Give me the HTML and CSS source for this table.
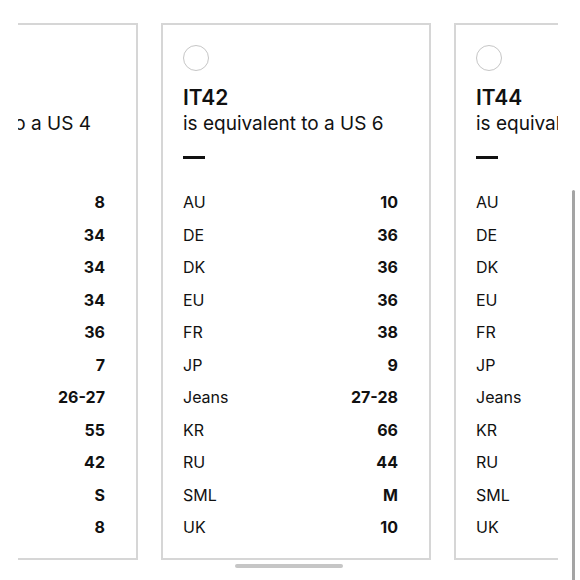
FILE: index.html
```html
<!DOCTYPE html>
<html lang="en">
<head>
<meta charset="utf-8">
<title>Size guide</title>
<link rel="stylesheet" href="styles.css">
</head>
<body>
<div class="page">
  <div class="viewport">
    <div class="track">
      <section class="card">
        <span class="radio"></span>
        <h2 class="size">IT40</h2>
        <p class="equiv">is equivalent to a US 4</p>
        <span class="dash"></span>
        <dl class="rows">
          <div class="row"><dt>AU</dt><dd>8</dd></div>
          <div class="row"><dt>DE</dt><dd>34</dd></div>
          <div class="row"><dt>DK</dt><dd>34</dd></div>
          <div class="row"><dt>EU</dt><dd>34</dd></div>
          <div class="row"><dt>FR</dt><dd>36</dd></div>
          <div class="row"><dt>JP</dt><dd>7</dd></div>
          <div class="row"><dt>Jeans</dt><dd>26-27</dd></div>
          <div class="row"><dt>KR</dt><dd>55</dd></div>
          <div class="row"><dt>RU</dt><dd>42</dd></div>
          <div class="row"><dt>SML</dt><dd>S</dd></div>
          <div class="row"><dt>UK</dt><dd>8</dd></div>
        </dl>
      </section>
      <section class="card">
        <span class="radio"></span>
        <h2 class="size">IT42</h2>
        <p class="equiv">is equivalent to a US 6</p>
        <span class="dash"></span>
        <dl class="rows">
          <div class="row"><dt>AU</dt><dd>10</dd></div>
          <div class="row"><dt>DE</dt><dd>36</dd></div>
          <div class="row"><dt>DK</dt><dd>36</dd></div>
          <div class="row"><dt>EU</dt><dd>36</dd></div>
          <div class="row"><dt>FR</dt><dd>38</dd></div>
          <div class="row"><dt>JP</dt><dd>9</dd></div>
          <div class="row"><dt>Jeans</dt><dd>27-28</dd></div>
          <div class="row"><dt>KR</dt><dd>66</dd></div>
          <div class="row"><dt>RU</dt><dd>44</dd></div>
          <div class="row"><dt>SML</dt><dd>M</dd></div>
          <div class="row"><dt>UK</dt><dd>10</dd></div>
        </dl>
      </section>
      <section class="card">
        <span class="radio"></span>
        <h2 class="size">IT44</h2>
        <p class="equiv">is equivalent to a US 8</p>
        <span class="dash"></span>
        <dl class="rows">
          <div class="row"><dt>AU</dt><dd>12</dd></div>
          <div class="row"><dt>DE</dt><dd>38</dd></div>
          <div class="row"><dt>DK</dt><dd>38</dd></div>
          <div class="row"><dt>EU</dt><dd>38</dd></div>
          <div class="row"><dt>FR</dt><dd>40</dd></div>
          <div class="row"><dt>JP</dt><dd>11</dd></div>
          <div class="row"><dt>Jeans</dt><dd>29-30</dd></div>
          <div class="row"><dt>KR</dt><dd>77</dd></div>
          <div class="row"><dt>RU</dt><dd>46</dd></div>
          <div class="row"><dt>SML</dt><dd>L</dd></div>
          <div class="row"><dt>UK</dt><dd>12</dd></div>
        </dl>
      </section>
    </div>
  </div>
  <div class="hbar"></div>
  <div class="vbar"></div>
</div>
</body>
</html>
```
FILE: styles.css
```css
html, body {
  margin: 0;
  padding: 0;
  background: #ffffff;
}
body {
  font-family: "Inter", "Liberation Sans", sans-serif;
  color: #111111;
}
.page {
  position: relative;
  width: 580px;
  height: 580px;
  overflow: hidden;
}
.viewport {
  margin-left: 18px;
  width: 540px;
  padding-top: 23px;
  overflow: hidden;
}
.track {
  display: flex;
  gap: 23px;
  margin-left: -150px;
}
.card {
  flex: 0 0 270px;
  box-sizing: border-box;
  border: 2px solid #d6d6d6;
  padding: 20px 31px 14.5px 20px;
  display: flex;
  flex-direction: column;
  align-items: flex-start;
}
.radio {
  width: 24px;
  height: 24px;
  border: 1px solid #c6c6c6;
  border-radius: 50%;
}
.size {
  margin: 15px 0 0;
  font-size: 21px;
  line-height: 24px;
  font-weight: 600;
}
.equiv {
  margin: 1px 0 0;
  font-size: 19px;
  line-height: 25px;
  font-weight: 400;
  white-space: nowrap;
}
.dash {
  margin-top: 20px;
  width: 22px;
  height: 3px;
  background: #111111;
}
.rows {
  margin: 27px 0 0;
  align-self: stretch;
}
.row {
  display: flex;
  justify-content: space-between;
  font-size: 16px;
  line-height: 32.5px;
}
.row dt {
  font-weight: 400;
}
.row dd {
  margin: 0;
  font-weight: 700;
}
.hbar {
  position: absolute;
  left: 235px;
  top: 564px;
  width: 108px;
  height: 4px;
  border-radius: 2px;
  background: #c6c6c6;
}
.vbar {
  position: absolute;
  left: 572px;
  top: 190px;
  width: 3px;
  height: 400px;
  border-radius: 2px;
  background: #a4a4a4;
}
```
